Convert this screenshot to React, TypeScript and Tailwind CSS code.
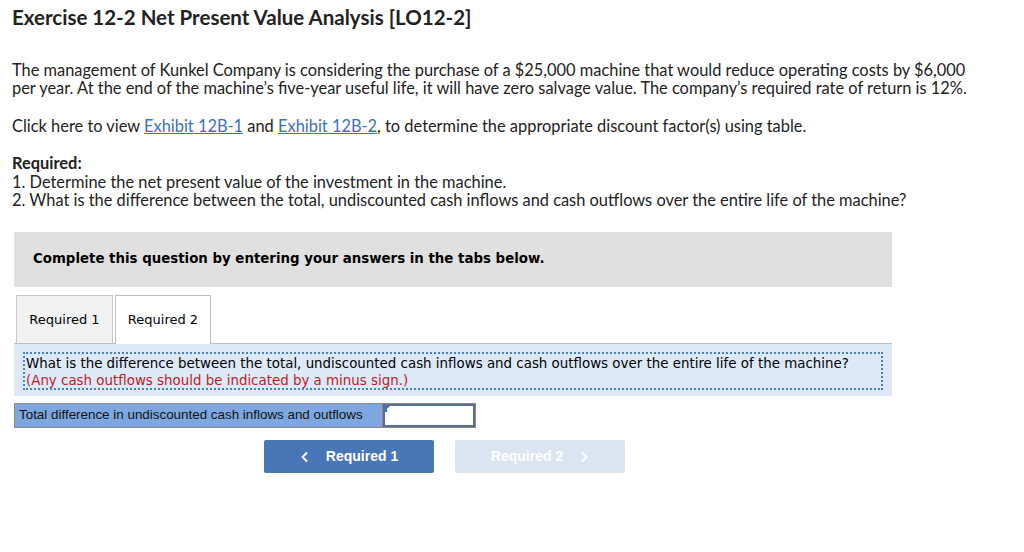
import React from "react";

export default function App() {
  const body = { fontFamily: "Lato, 'Open Sans', sans-serif" };
  const verdana = { fontFamily: "'DejaVu Sans', Verdana, sans-serif" };
  return (
    <div className="w-[1024px] h-[552px] bg-white text-[#222] overflow-hidden">
      <div className="pl-[12px] pt-[4px]" style={body}>
        <h1 className="text-[20.5px] font-bold leading-[26px] text-[#222]">
          Exercise 12-2 Net Present Value Analysis [LO12-2]
        </h1>
        <p className="mt-[31px] text-[16.4px] leading-[18px] w-[975px]">
          The management of Kunkel Company is considering the purchase of a $25,000 machine that would reduce operating costs by $6,000 per year. At the end of the machine’s five-year useful life, it will have zero salvage value. The company’s required rate of return is 12%.
        </p>
        <p className="mt-[20px] text-[16.4px] leading-[18px]">
          Click here to view <span className="text-[#3a71b8] underline">Exhibit 12B-1</span> and{" "}
          <span className="text-[#3a71b8] underline">Exhibit 12B-2</span>, to determine the appropriate discount factor(s) using table.
        </p>
        <p className="mt-[19px] text-[16.4px] leading-[18px] font-bold">Required:</p>
        <p className="mt-[1px] text-[16.4px] leading-[18px]">1. Determine the net present value of the investment in the machine.</p>
        <p className="text-[16.4px] leading-[18px]">
          2. What is the difference between the total, undiscounted cash inflows and cash outflows over the entire life of the machine?
        </p>
      </div>

      <div className="ml-[14px] w-[878px]" style={verdana}>
        <div className="mt-[23px] h-[55px] bg-[#e0e0e0] pl-[19px] pt-[14px]">
          <span className="text-[13.35px] leading-[17px] font-bold text-black">Complete this question by entering your answers in the tabs below.</span>
        </div>

        <div className="mt-[7px] flex items-end gap-[2px] pl-[2px] h-[49px]">
          <div className="w-[97px] h-[48px] bg-[#f2f2f2] border border-[#c8c8c8] border-b-0 flex items-center justify-center text-[13px] text-black">
            Required 1
          </div>
          <div className="relative z-10 w-[96px] h-[49px] bg-white border border-[#bdbdbd] border-b-0 flex items-center justify-center text-[13px] text-black -mb-[1px]">
            Required 2
          </div>
        </div>

        <div className="border-t border-[#bdbdbd] bg-[#dde9f7] h-[53px] px-[9px] pt-[8px]">
          <div className="border-2 border-dotted border-[#4b7fc4] h-[38px] pl-[1px] text-[13.4px] leading-[17px]">
            <div className="text-black mt-[1px]">What is the difference between the total, undiscounted cash inflows and cash outflows over the entire life of the machine?</div>
            <div className="text-[#c0201c]">(Any cash outflows should be indicated by a minus sign.)</div>
          </div>
        </div>

        <div className="mt-[7px] flex h-[25px] w-[462px] border border-[#8a8a8a]">
          <div className="w-[368px] bg-[#7ea7df] border-r border-[#8a8a8a] flex items-center pl-[4px] text-[13.4px] text-[#111]" style={{ fontFamily: "'Liberation Sans', Arial, sans-serif" }}>
            Total difference in undiscounted cash inflows and outflows
          </div>
          <div className="relative flex-1 bg-white border-2 border-[#5a6f8c]">
            <div className="absolute left-0 top-0 w-0 h-0 border-t-[5px] border-t-[#3f75c0] border-r-[5px] border-r-transparent"></div>
            <div className="absolute left-0 top-0 w-[2px] h-[6px] bg-[#3f75c0]"></div>
          </div>
        </div>

        <div className="mt-[12px] flex gap-[21px] pl-[250px]" style={{ fontFamily: "'Liberation Sans', Arial, sans-serif" }}>
          <div className="w-[170px] h-[33px] rounded-[2px] bg-[#4876b6] flex items-center justify-center text-white text-[14px] font-bold">
            <svg width="10" height="12" viewBox="0 0 10 12" className="mr-[16px]"><path d="M7 1.5 L2.5 6 L7 10.5" stroke="white" strokeWidth="1.8" fill="none" /></svg>
            Required 1
          </div>
          <div className="w-[170px] h-[33px] rounded-[2px] bg-[#dbe5f1] flex items-center justify-center text-white text-[14px] font-bold">
            Required 2
            <svg width="10" height="12" viewBox="0 0 10 12" className="ml-[16px]"><path d="M3 1.5 L7.5 6 L3 10.5" stroke="white" strokeWidth="1.8" fill="none" /></svg>
          </div>
        </div>
      </div>
    </div>
  );
}
